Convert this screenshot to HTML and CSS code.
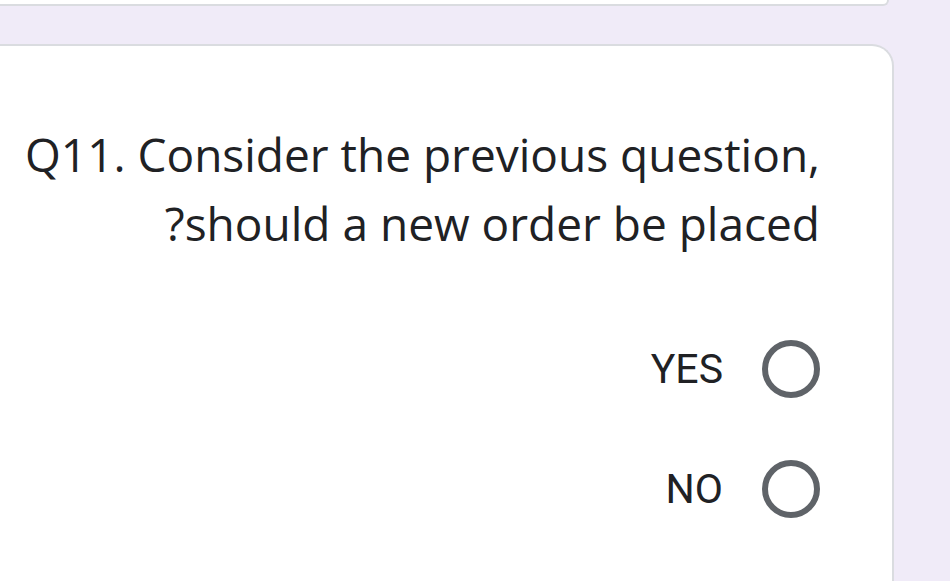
FILE: index.html
```html
<!DOCTYPE html>
<html lang="en">
<head>
<meta charset="utf-8">
<title>Form question</title>
<link rel="stylesheet" href="styles.css">
</head>
<body>
<div class="page">
  <div class="prev-card"></div>
  <div class="card">
    <div class="question" dir="rtl">Q11. Consider the previous question, should a new order be placed?</div>
    <div class="options">
      <label class="option">
        <span class="radio"></span>
        <span class="opt-label">YES</span>
      </label>
      <label class="option">
        <span class="radio"></span>
        <span class="opt-label">NO</span>
      </label>
    </div>
  </div>
</div>
</body>
</html>
```
FILE: styles.css
```css
html, body {
  margin: 0;
  padding: 0;
  background: #f0ebf8;
  overflow: hidden;
}
.page {
  width: 950px;
  height: 581px;
  overflow: hidden;
  font-family: Roboto, "Noto Sans", sans-serif;
  color: #202124;
}
.prev-card {
  margin-left: -30px;
  width: 917px;
  height: 4px;
  background: #fff;
  border-right: 2px solid #dadce0;
  border-bottom: 2px solid #dadce0;
  border-bottom-right-radius: 20px;
}
.card {
  margin-top: 38px;
  margin-left: -30px;
  width: 924px;
  height: 600px;
  box-sizing: border-box;
  background: #fff;
  border-top: 2px solid #dadce0;
  border-right: 2px solid #dadce0;
  border-top-right-radius: 22px;
  padding: 74px 72px 0 20px;
}
.question {
  font-family: "Open Sans", Roboto, sans-serif;
  font-size: 46px;
  line-height: 69px;
  text-align: right;
}
.options {
  margin-top: 51px;
  display: flex;
  flex-direction: column;
}
.option {
  height: 120px;
  display: flex;
  flex-direction: row-reverse;
  align-items: center;
  gap: 39px;
}
.radio {
  width: 58px;
  height: 58px;
  box-sizing: border-box;
  border: 6px solid #5f6368;
  border-radius: 50%;
  flex: none;
}
.opt-label {
  font-size: 41px;
  line-height: 48px;
}
```
